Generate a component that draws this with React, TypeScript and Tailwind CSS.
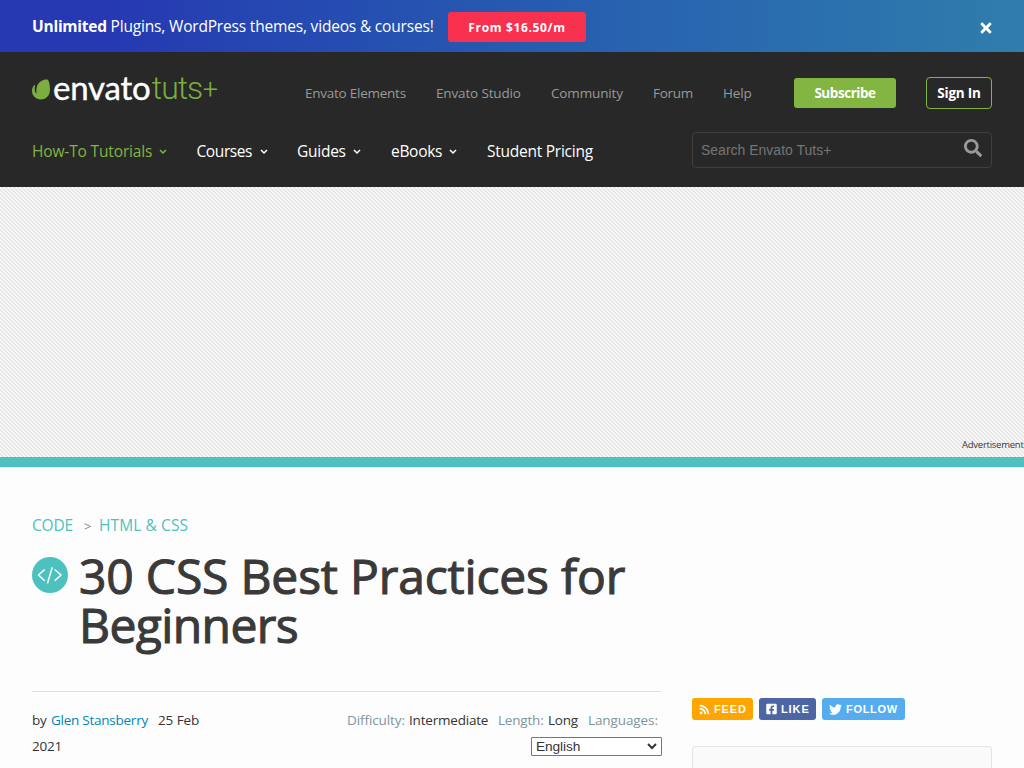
import type { ReactNode } from "react";
import { FaRss, FaFacebookSquare, FaTwitter, FaSearch, FaTimes } from "react-icons/fa";

function Chevron() {
  return (
    <svg viewBox="0 0 8 6" className="mt-[2px] h-[6px] w-[8px]" fill="none" stroke="currentColor" strokeWidth="1.5">
      <path d="M1 1l3 3 3-3" />
    </svg>
  );
}

function Logo() {
  return (
    <div className="flex h-[33px] w-[186px] items-start">
      <svg viewBox="0 0 18 21" className="mt-[8px] h-[21px] w-[18px] shrink-0" fill="#7cae3f">
        <path d="M14.8.4C11 .2 6.800 2.800 5.200 6.500C4.200 9 4.300 12 4.500 13.800C4.600 14.400 4 14.500 3.700 14C2.600 11.900 2.400 9 3.100 6.200C3.100 5.800 2.700 5.800 2.400 6.100C.9 7.700 0 9.400 0 12C0 17 4 20.400 8.800 20.400C14.500 20.400 18 16 18 10.400C18 6 17 2.100 16 .9C15.700.5 15.300.4 14.800.4Z" />
      </svg>
      <span className="ml-[3px] w-[99px] whitespace-nowrap font-['Lato'] text-[33px] leading-[33px] tracking-[-0.2px] text-white [-webkit-text-stroke:0.4px_#fff]">envato</span>
      <span className="mt-[1px] w-[51px] whitespace-nowrap font-['Roboto'] text-[32px] font-light leading-[33px] tracking-[-1px] text-[#7cae3f]">tuts</span>
      <span className="mt-[3px] whitespace-nowrap font-['Roboto'] text-[27px] font-light leading-[33px] text-[#7cae3f]">+</span>
    </div>
  );
}

function NavItem({ width, tracking = "tracking-[-0.25px]", active, menu = true, children }: { width: string; tracking?: string; active?: boolean; menu?: boolean; children: ReactNode }) {
  return (
    <a className={`flex items-center whitespace-nowrap text-[15.500px] leading-6 ${width} ${tracking} ${active ? "text-[#82b541]" : "text-white"}`}>
      <span className="grow">{children}</span>
      {menu && <Chevron />}
    </a>
  );
}

function Promo() {
  return (
    <div className="flex h-[52px] items-center bg-linear-to-r from-[#2638b2] from-10% to-[#307dac] pl-8 pr-[30px] text-white">
      <p className="w-[416px] whitespace-nowrap text-[15.500px] leading-6 tracking-[-0.18px]">
        <b className="font-bold tracking-[-0.25px]">Unlimited</b> Plugins, WordPress themes, videos &amp; courses!
      </p>
      <a className="mt-[2px] flex h-[30px] w-[138px] items-center justify-center rounded-[3px] bg-[#f8314f] pt-px text-[12px] font-bold tracking-[0.65px]">From $16.50/m</a>
      <FaTimes className="ml-auto mt-[4px] h-[16px] w-[16px]" />
    </div>
  );
}

function Header() {
  return (
    <header className="h-[135px] bg-[#282828] px-8 pt-[19px]">
      <div className="flex h-[44px] items-start">
        <Logo />
        <nav className="ml-[87px] mt-[12px] flex whitespace-nowrap text-[13.500px] leading-5 tracking-[-0.15px] text-[#999]">
          <a className="w-[131px] tracking-[-0.25px]">Envato Elements</a>
          <a className="w-[115px]">Envato Studio</a>
          <a className="w-[102px]">Community</a>
          <a className="w-[70px] tracking-[-0.3px]">Forum</a>
          <a className="w-[71px]">Help</a>
        </nav>
        <a className="mt-[7px] flex h-[30px] w-[102px] items-center justify-center rounded-[3px] bg-[#82b541] text-[13.500px] font-bold tracking-[-0.45px] text-white">Subscribe</a>
        <a className="ml-auto mt-[6px] flex h-[32px] w-[66px] items-center justify-center rounded-[4px] border border-[#82b541] text-[13.500px] font-bold tracking-[-0.2px] text-white">Sign In</a>
      </div>
      <div className="mt-[17px] flex items-center">
        <nav className="mt-[2px] flex grow">
          <NavItem width="w-[135px] mr-[29.500px]" tracking="tracking-[-0.15px]" active>How-To Tutorials</NavItem>
          <NavItem width="w-[71px] mr-[29.500px]" tracking="tracking-[-0.4px]">Courses</NavItem>
          <NavItem width="w-[64px] mr-[30px]">Guides</NavItem>
          <NavItem width="w-[66px] mr-[30px]" tracking="tracking-[-0.3px]">eBooks</NavItem>
          <NavItem width="w-[108px]" menu={false}>Student Pricing</NavItem>
        </nav>
        <div className="flex h-[36px] w-[300px] items-center justify-between rounded-[4px] border border-[#3f3f3f] px-2 font-['Liberation_Sans'] text-[14px] text-[#757575]">
          <span>Search Envato Tuts+</span>
          <FaSearch className="-mt-[4px] mr-px h-[18px] w-[18px] text-[#999]" />
        </div>
      </div>
    </header>
  );
}

function Badge({ style, icon, children }: { style: string; icon: ReactNode; children: ReactNode }) {
  return (
    <a className={`flex h-[22px] items-center rounded-[3px] pl-[7px] font-['Liberation_Sans'] text-[11px] font-bold text-white ${style}`}>
      {icon}
      <span>{children}</span>
    </a>
  );
}

function Article() {
  return (
    <main className="flex h-[301px] bg-[#fdfdfd] px-8">
      <section className="w-[630px] shrink-0">
        <div className="mt-[46px] flex h-[24px] whitespace-nowrap text-[15.500px] leading-[24px] text-[#4dc1be]">
          <span className="w-[51px] tracking-[-0.2px]">CODE</span>
          <span className="w-[16px] pl-px pt-px text-[13px] text-[#888]">&gt;</span>
          <span className="tracking-[0.1px]">HTML &amp; CSS</span>
        </div>
        <div className="mt-[14px] flex h-[140px]">
          <svg viewBox="0 0 36 36" className="mt-[6px] h-9 w-9 shrink-0" fill="none">
            <circle cx="18" cy="18" r="18" fill="#4dc1be" />
            <path d="M12.700 12.500L6.500 18l6.200 5.800M22.700 12.500L29 18l-6.300 5.800M20.300 10.300L15.400 26.500" stroke="#fff" strokeWidth="1.500" />
          </svg>
          <h1 className="ml-[11px] whitespace-nowrap text-[48px] leading-[49px] tracking-[-0.17px] text-[#3a3a3a] [-webkit-text-stroke:1.1px_#3a3a3a]">
            30 CSS Best Practices for
            <br />
            <span className="tracking-[-0.6px]">Beginners</span>
          </h1>
        </div>
        <div className="flex justify-between border-t border-[#e1e1e1] pt-[15px] text-[13.500px] leading-[26px] text-[#343434]">
          <div className="whitespace-nowrap tracking-[-0.2px]">
            <div className="flex">
              <span className="w-[19px]">by</span>
              <span className="w-[107px] tracking-[-0.25px] text-[#0085b6]">Glen Stansberry</span>
              <span className="tracking-[-0.1px]">25 Feb</span>
            </div>
            <div>2021</div>
          </div>
          <div className="flex w-[315px] flex-col whitespace-nowrap tracking-[-0.2px]">
            <div className="flex text-[#7f949d]">
              <span className="w-[62px] tracking-[-0.1px]">Difficulty:</span>
              <span className="w-[89px] text-[#343434]">Intermediate</span>
              <span className="w-[50px]">Length:</span>
              <span className="w-[40px] text-[#343434]">Long</span>
              <span className="tracking-[-0.1px]">Languages:</span>
            </div>
            <div className="mt-[4px] flex h-[19px] w-[131px] items-center justify-between self-end rounded-[1px] border border-[#767676] bg-white pl-1 pr-1 font-['Liberation_Sans'] text-[13.700px] leading-[17px] tracking-[-0.1px]">
              <span>English</span>
              <svg viewBox="0 0 10 7" className="h-[7px] w-[10px]" fill="none" stroke="#343434" strokeWidth="2">
                <path d="M1 1l4 4 4-4" />
              </svg>
            </div>
          </div>
        </div>
      </section>
      <aside className="ml-[30px] w-[300px] pt-[231px]">
        <div className="flex">
          <Badge style="w-[61px] bg-[#ffa500] tracking-[0.9px]" icon={<FaRss className="mr-[4px] h-[11px] w-[11px] shrink-0" />}>FEED</Badge>
          <Badge style="ml-[6px] w-[57px] bg-[#4c66a4] tracking-[0.9px]" icon={<FaFacebookSquare className="mr-[4px] h-[12px] w-[11px] shrink-0" />}>LIKE</Badge>
          <Badge style="ml-[6px] w-[83px] bg-[#55acee] tracking-[0.7px]" icon={<FaTwitter className="mr-[4px] h-[13px] w-[13px] shrink-0" />}>FOLLOW</Badge>
        </div>
        <div className="mt-[26px] h-[22px] rounded-t-[4px] border border-b-0 border-[#dfe5e9] bg-[#fafafa]" />
      </aside>
    </main>
  );
}

export default function App() {
  return (
    <div className="h-[768px] w-[1024px] overflow-hidden bg-[#fdfdfd] font-['Open_Sans','Noto_Sans',sans-serif]">
      <Promo />
      <Header />
      <div className="flex h-[270px] items-end justify-end bg-[#f8f8f8] bg-[linear-gradient(45deg,#e6e6e6_25%,transparent_25%,transparent_50%,#e6e6e6_50%,#e6e6e6_75%,transparent_75%)] bg-[length:4px_4px] pb-[6px] text-[9.500px] leading-[13px] text-[#3a3a3a]">
        <span className="w-[62px] whitespace-nowrap tracking-[-0.25px]">Advertisement</span>
      </div>
      <div className="h-[10px] bg-[#4dc1be]" />
      <Article />
    </div>
  );
}
